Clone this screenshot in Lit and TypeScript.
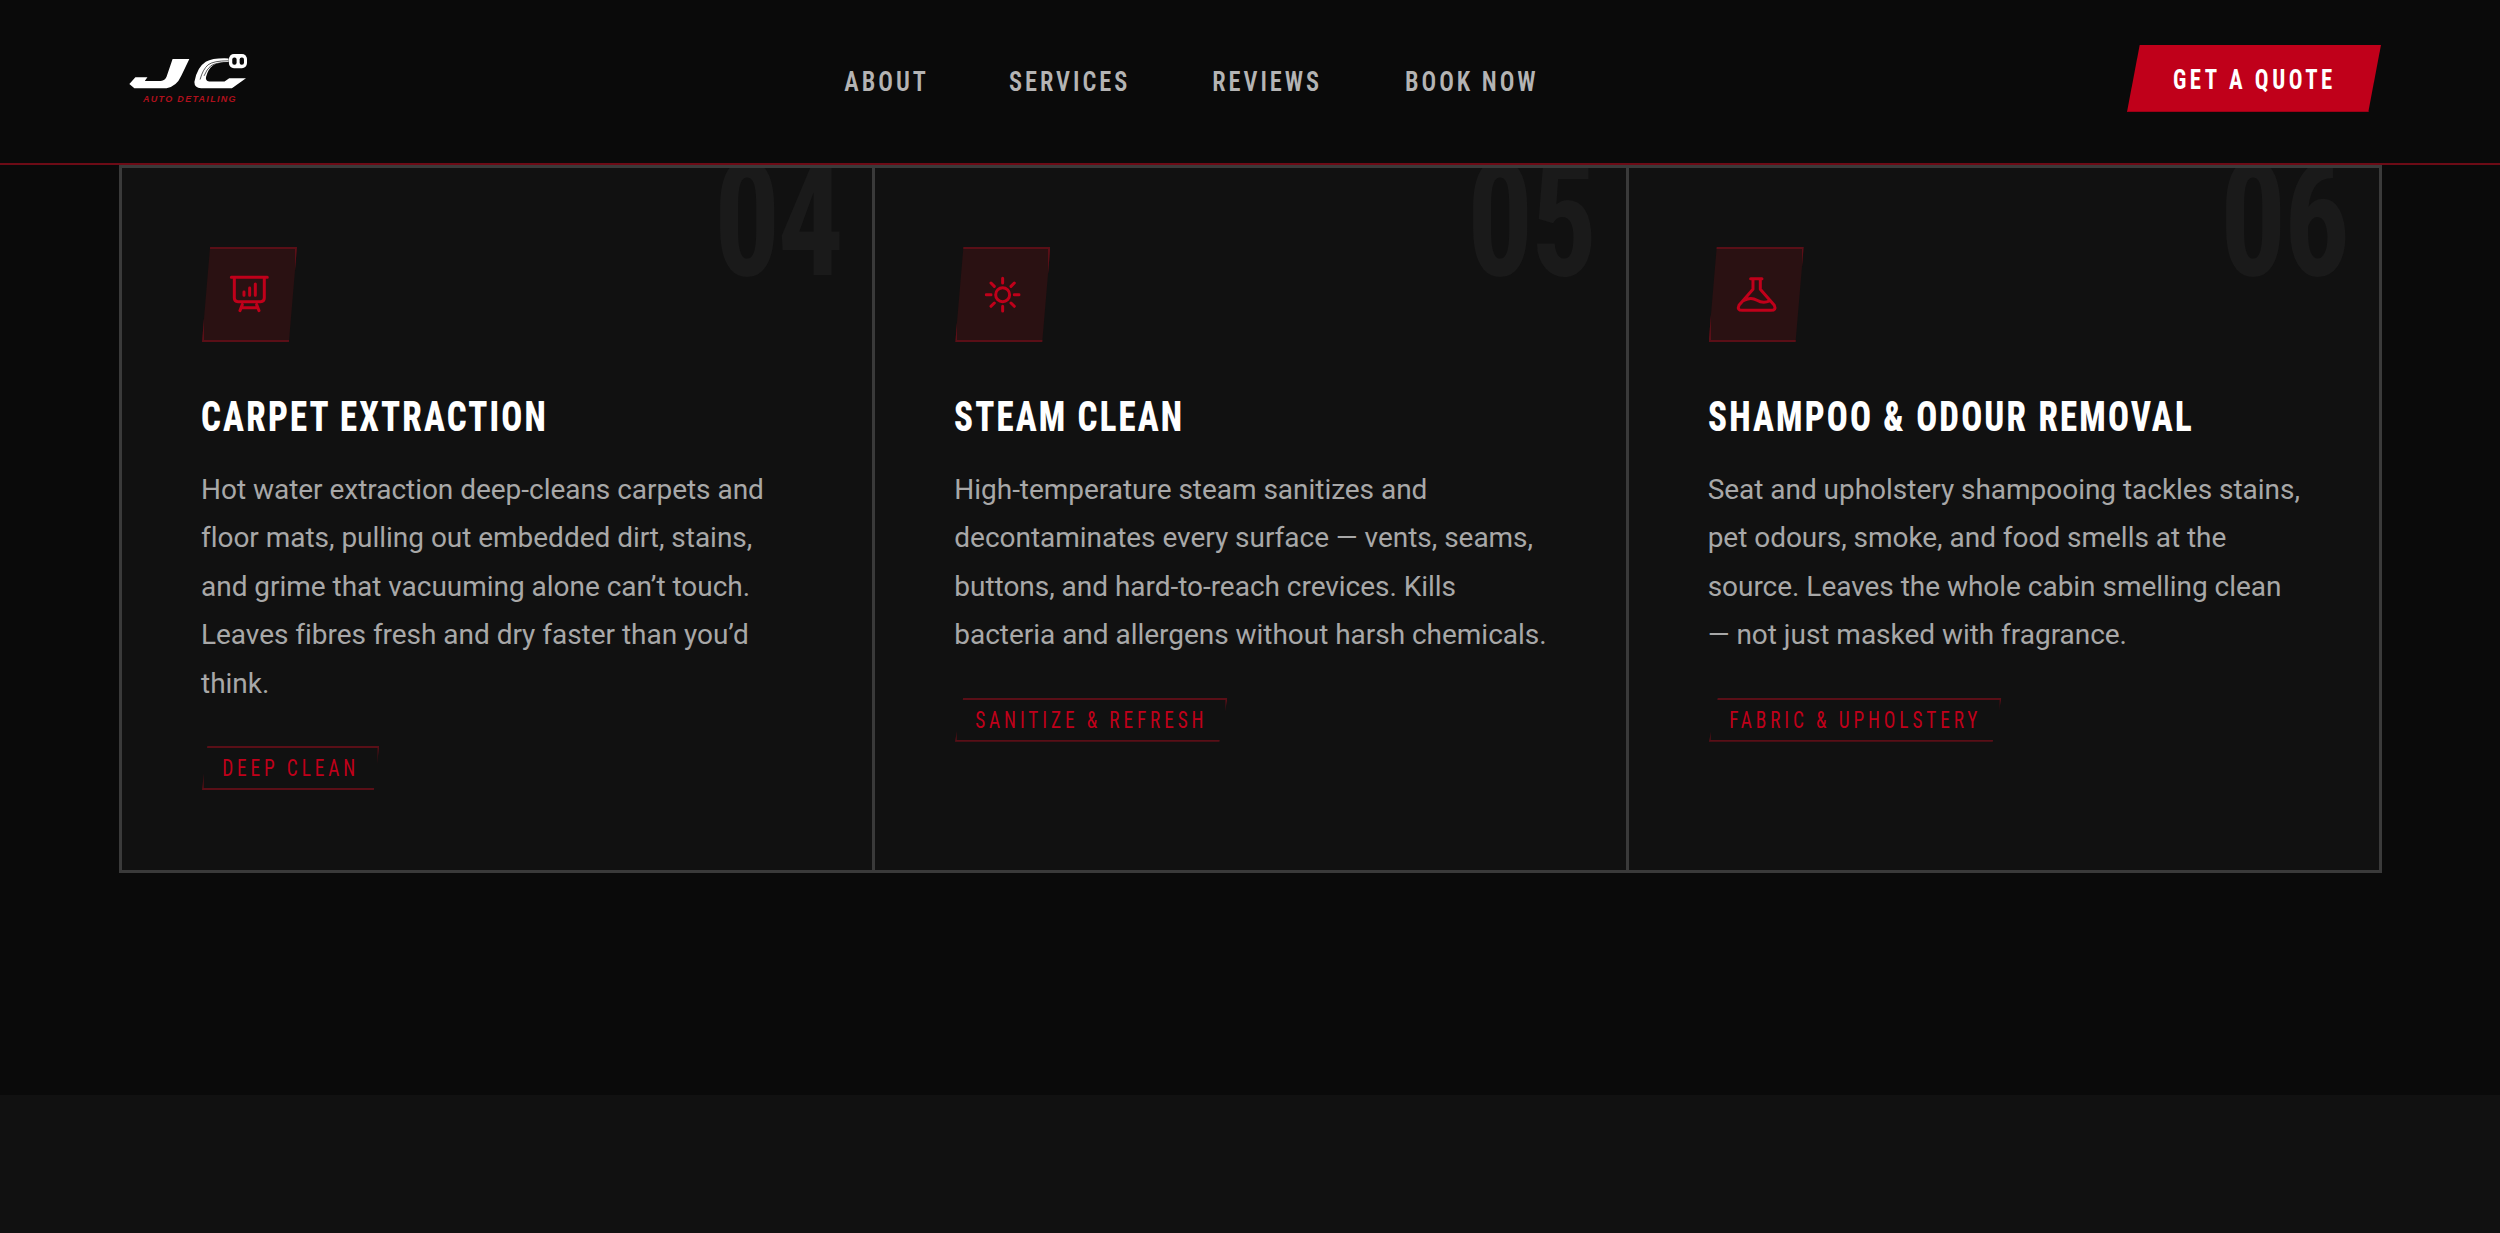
import { LitElement, html, css, svg } from "lit";
import { customElement } from "lit/decorators.js";

const icons = {
  board: svg`<svg class="ico" viewBox="142 131 130 130"><path d="M152 144h108M161 144v62q0 11 11 11h68q11 0 11-11v-62M190 188v10M207 176v22M224 164v34M185 226l-7 18M228 226l7 18M182 235h49"/></svg>`,
  sun: svg`<svg class="ico" viewBox="151 158 130 130"><circle cx="216" cy="223" r="21"/><path d="M216 174v14M216 258v14M167 223h14M251 223h14M181 188l10 10M251 188l-10 10M181 258l10-10M251 258l-10-10"/></svg>`,
  flask: svg`<svg class="ico" viewBox="132 158 130 130"><path d="M179 175h34M186 175v32l-42 48q-7 15 10 15h86q17 0 10-15l-42-48v-32M160 240q20-11 38 0t38 2"/></svg>`,
};

const cards = [
  {
    num: "04", icon: icons.board, title: "CARPET EXTRACTION", tag: "DEEP CLEAN",
    lines: ["Hot water extraction deep-cleans carpets and", "floor mats, pulling out embedded dirt, stains,", "and grime that vacuuming alone can’t touch.", "Leaves fibres fresh and dry faster than you’d", "think."],
  },
  {
    num: "05", icon: icons.sun, title: "STEAM CLEAN", tag: "SANITIZE & REFRESH",
    lines: ["High-temperature steam sanitizes and", "decontaminates every surface — vents, seams,", "buttons, and hard-to-reach crevices. Kills", "bacteria and allergens without harsh chemicals."],
  },
  {
    num: "06", icon: icons.flask, title: "SHAMPOO & ODOUR REMOVAL", tag: "FABRIC & UPHOLSTERY",
    lines: ["Seat and upholstery shampooing tackles stains,", "pet odours, smoke, and food smells at the", "source. Leaves the whole cabin smelling clean", "— not just masked with fragrance."],
  },
];

@customElement("app-root")
export class AppRoot extends LitElement {
  static styles = css`
    :host {
      display: block;
      height: 1233px;
      overflow: hidden;
      background: #0a0a0a;
      font-family: "Roboto", sans-serif;
    }
    header {
      height: 163px;
      padding: 0 119px 0 128px;
      display: flex;
      align-items: center;
      justify-content: space-between;
      background: #0a0a0a;
      border-bottom: 2px solid #6d0b16;
    }
    .logo { display: flex; flex-direction: column; width: 120px; margin-top: -6px; }
    .logo svg { display: block; width: 119px; height: 37px; }
    .logo span {
      font: italic 700 9px "Liberation Sans", sans-serif;
      letter-spacing: 1.3px;
      color: #b0101c;
      margin: 4px 0 0 15px;
      white-space: nowrap;
    }
    nav { display: flex; gap: 65px; margin-left: 12px; }
    nav a {
      display: block;
      transform: scaleX(0.87);
      font-stretch: 75%;
      font-weight: 600;
      font-size: 28px;
      letter-spacing: 3.4px;
      color: #b4b4b4;
    }
    .cta {
      width: 254px;
      height: 67px;
      box-sizing: border-box;
      margin-top: -6px;
      padding-top: 4px;
      display: flex;
      align-items: center;
      justify-content: center;
      background: #c0001a;
      border-bottom: 1px solid #9c0016;
      clip-path: polygon(5% 0, 100% 0, 95% 100%, 0 100%);
      color: #fff;
      font-stretch: 75%;
      font-weight: 700;
      font-size: 27px;
      letter-spacing: 4.2px;
    }
    .cta span { transform: scaleX(0.845); white-space: nowrap; }
    .grid {
      margin: 0 118px 0 119px;
      display: grid;
      grid-template-columns: repeat(3, 1fr);
      gap: 3px;
      padding: 3px;
      background: #3a3a3a;
      height: 708px;
      box-sizing: border-box;
    }
    .card {
      position: relative;
      overflow: hidden;
      background: #111;
      padding: 79px 80px 0;
    }
    .num {
      position: absolute;
      top: -37px;
      right: 31px;
      transform: scaleX(0.81);
      transform-origin: right;
      font-stretch: 75%;
      font-weight: 700;
      font-size: 162px;
      letter-spacing: -3px;
      color: #1a1a1a;
      line-height: 1.1;
    }
    .box {
      width: 95px;
      height: 95px;
      box-sizing: border-box;
      display: flex;
      align-items: center;
      justify-content: center;
      background: #2a1112;
      border: 2px solid #5a0f17;
      clip-path: polygon(8.5% 0, 100% 0, 91.5% 100%, 0 100%);
    }
    .ico {
      width: 43.3px;
      height: 43.3px;
      fill: none;
      stroke: #c0001a;
      stroke-width: 9;
      stroke-linecap: round;
      stroke-linejoin: round;
    }
    h3 {
      margin: 47px 0 0 -1px;
      transform: scaleX(0.83);
      transform-origin: left;
      font-stretch: 75%;
      font-weight: 800;
      font-size: 42px;
      line-height: 56px;
      letter-spacing: 2.6px;
      color: #fff;
      white-space: nowrap;
    }
    .body {
      margin: 21px 0 0 -1px;
      font-size: 28px;
      line-height: 48.4px;
      letter-spacing: -0.03px;
      color: #a8a8a8;
      white-space: nowrap;
    }
    .tag {
      display: inline-block;
      margin-top: 38px;
      height: 44px;
      box-sizing: border-box;
      padding: 0 22px;
      border: 2px solid #5a0f17;
      transform: scaleX(0.84);
      transform-origin: left;
      clip-path: polygon(3% 0, 100% 0, 97% 100%, 0 100%);
      font-stretch: 75%;
      font-size: 23px;
      line-height: 42px;
      letter-spacing: 4.6px;
      color: #c0001a;
    }
    .foot {
      position: absolute;
      left: 0;
      right: 0;
      top: 1095px;
      height: 138px;
      background: #111;
    }
  `;

  render() {
    return html`
      <header>
        <div class="logo">
          <svg viewBox="85 100 355 110">
            <path fill="#fff" d="M218 118h50l-24 50q-14 32-44 37h-96l-15-13 18-20h36l-8 11h48q12 0 17-12z" />
            <path fill="#fff" d="M385 116q-46-2-68 10-26 16-34 60 0 17 20 19h92l42-30h-50l-14 10h-46q-12-2-9-14 6-24 20-34 14-9 47-10z" />
            <path stroke="#0a0a0a" stroke-width="2" fill="none" d="M384 123q-44 0-60 12-16 14-24 44M384 128q-36 0-52 10-12 10-20 30" />
            <rect x="386" y="103" width="54" height="42" rx="15" fill="#fff" />
            <rect x="396" y="113" width="13" height="22" rx="6" fill="#0a0a0a" />
            <rect x="418" y="113" width="13" height="22" rx="6" fill="#0a0a0a" />
          </svg>
          <span>AUTO DETAILING</span>
        </div>
        <nav>
          <a>ABOUT</a><a>SERVICES</a><a>REVIEWS</a><a>BOOK NOW</a>
        </nav>
        <a class="cta"><span>GET A QUOTE</span></a>
      </header>
      <section class="grid">
        ${cards.map(
          (c) => html`
            <article class="card">
              <div class="num">${c.num}</div>
              <div class="box">${c.icon}</div>
              <h3>${c.title}</h3>
              <p class="body">${c.lines.map((l) => html`${l}<br />`)}</p>
              <span class="tag">${c.tag}</span>
            </article>
          `
        )}
      </section>
      <div class="foot"></div>
    `;
  }
}
